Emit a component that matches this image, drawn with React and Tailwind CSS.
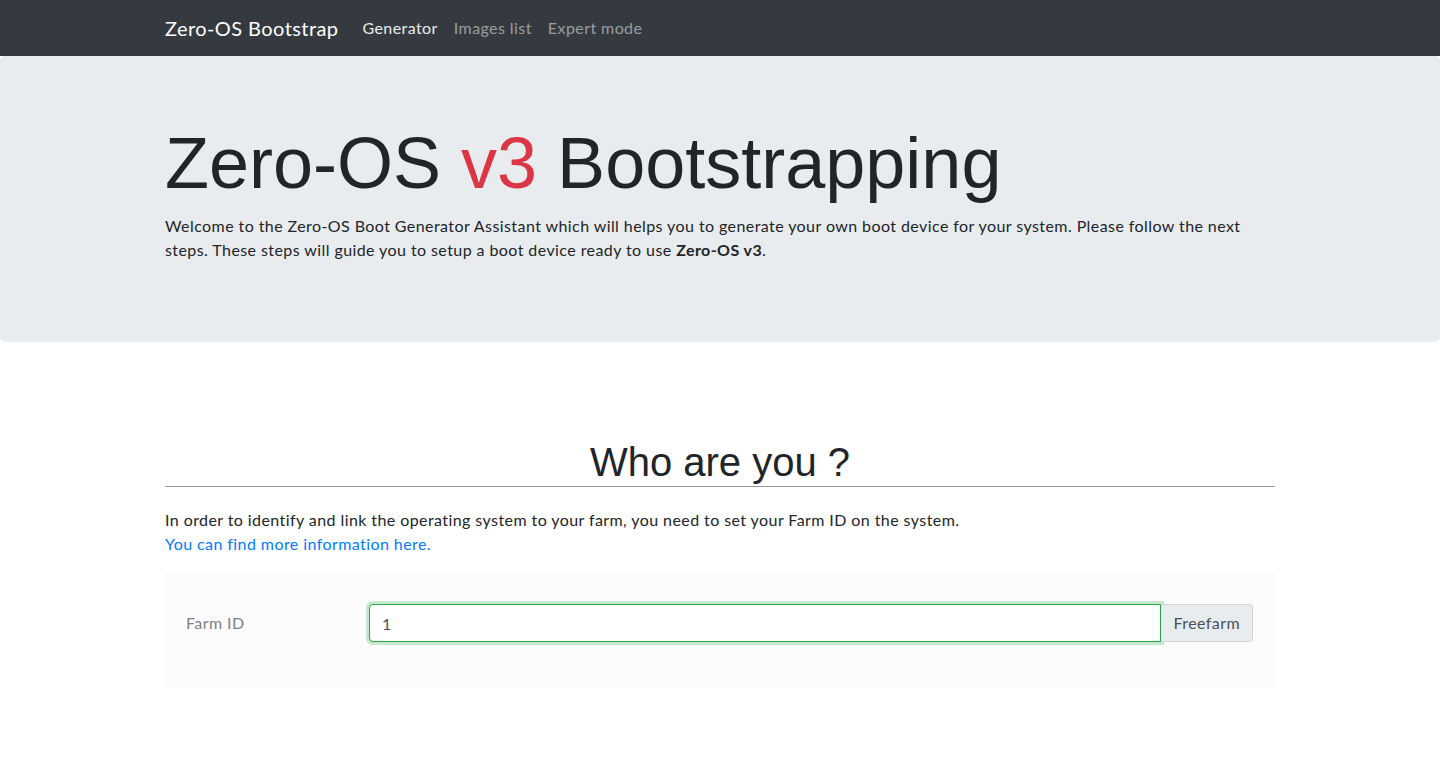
import React from 'react';

const body = "font-['Lato','Noto_Sans',sans-serif] tracking-[0.42px]";
const heading = "font-['Liberation_Sans',Arial,sans-serif] tracking-normal";

function Navbar() {
  return (
    <nav className="h-14 bg-[#343a40]">
      <div className="mx-auto flex h-full w-[1140px] items-center px-[15px]">
        <span className="mr-4 text-[20px] text-white">Zero-OS Bootstrap</span>
        <a className="px-2 text-white/90">Generator</a>
        <a className="px-2 text-white/50">Images list</a>
        <a className="px-2 text-white/50">Expert mode</a>
      </div>
    </nav>
  );
}

export default function App() {
  return (
    <div className={`min-h-[760px] bg-white text-[#212529] ${body}`}>
      <Navbar />

      {/* jumbotron */}
      <header className="h-[286px] rounded-[5px] bg-[#e9ecef] pt-16">
        <div className="mx-auto w-[1140px] px-[15px]">
          <h1 className={`mb-2 text-[72px] leading-[1.2] ${heading}`}>
            Zero-OS <span className="text-[#dc3545]">v3</span> Bootstrapping
          </h1>
          <p className="text-[16px] leading-6">
            Welcome to the Zero-OS Boot Generator Assistant which will helps you to generate your own boot device for your system. Please follow the next steps. These steps will guide you to setup a boot device ready to use <b>Zero-OS v3</b>.
          </p>
        </div>
      </header>

      <main className="mx-auto mt-24 w-[1140px] px-[15px]">
        <h2 className={`text-center text-[40px] leading-[48px] ${heading}`}>
          Who are you ?
        </h2>
        <hr className="border-t border-[#999]" />
        <p className="mt-[21px] leading-6">
          In order to identify and link the operating system to your farm, you need to set your Farm ID on the system.
          <br />
          <a className="text-[#007bff]">You can find more information here.</a>
        </p>

        <div className="mt-4 bg-[#fcfcfc] pb-[45px] pl-[21px] pr-[22px] pt-8">
          <div className="flex items-center">
            <label className="w-[183px] text-[#7a8288]">Farm ID</label>
            <div className="flex flex-1">
              <input
                defaultValue="1"
                className="h-[38px] flex-1 rounded-l-[4px] border border-[#28a745] bg-white px-3 text-[#495057] shadow-[0_0_0_3px_rgba(40,167,69,0.25)] outline-none"
              />
              <span className="flex h-[38px] items-center rounded-r-[4px] border border-l-0 border-[#ced4da] bg-[#e9ecef] px-3 text-[#495057]">
                Freefarm
              </span>
            </div>
          </div>
        </div>
      </main>
    </div>
  );
}
